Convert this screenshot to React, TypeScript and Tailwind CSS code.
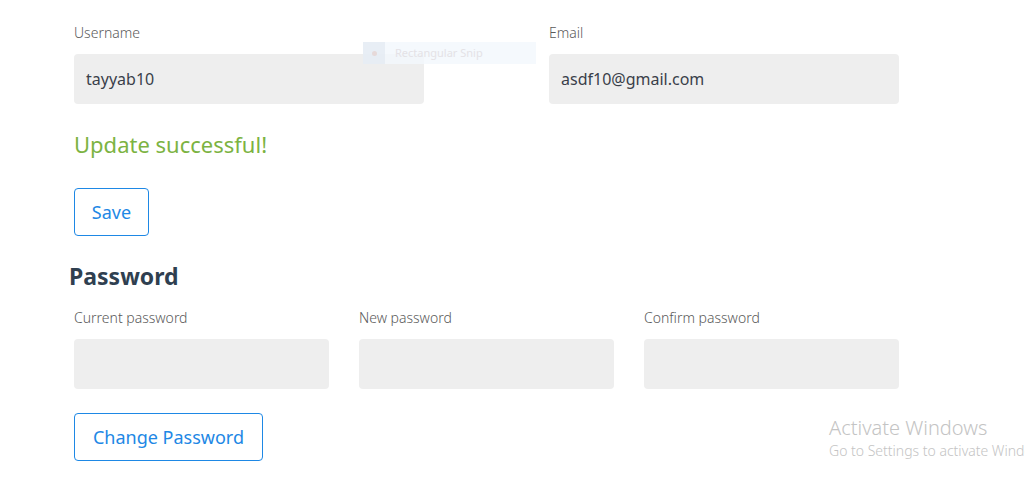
import React from "react";

const font = { fontFamily: '"Noto Sans", "Open Sans", sans-serif' };

function Field({ label, value, w }: { label: string; value?: string; w: string }) {
  return (
    <div className={`flex flex-col ${w}`}>
      <label className="text-[14px] leading-[20px] text-[#5a5a5a] font-light">{label}</label>
      <div className="mt-[11px] h-[50px] w-full rounded-[4px] bg-[#eeeeee] px-[12px] flex items-center text-[16px] text-[#3a3f4a]">
        {value}
      </div>
    </div>
  );
}

export default function App() {
  return (
    <div className="relative w-[1025px] h-[482px] overflow-hidden bg-white" style={font}>
      <div className="pl-[69px] pt-[23px]">
        <div className="pl-[5px]">
          <div className="flex gap-[125px]">
            <Field label="Username" value="tayyab10" w="w-[350px]" />
            <Field label="Email" value="asdf10@gmail.com" w="w-[350px]" />
          </div>
          <div className="mt-[24px] text-[22px] leading-[32px] text-[#7cb342]">Update successful!</div>
          <button className="mt-[28px] h-[48px] w-[75px] rounded-[4px] border border-[#1e88e5] text-[18px] text-[#1e88e5] flex items-center justify-center">
            Save
          </button>
        </div>
        <h2 className="mt-[24px] text-[23px] leading-[32px] font-bold text-[#2f3f50]">Password</h2>
        <div className="pl-[5px]">
          <div className="mt-[16px] flex gap-[30px]">
            <Field label="Current password" w="w-[255px]" />
            <Field label="New password" w="w-[255px]" />
            <Field label="Confirm password" w="w-[255px]" />
          </div>
          <button className="mt-[24px] h-[48px] w-[189px] rounded-[4px] border border-[#1e88e5] text-[18px] text-[#1e88e5] flex items-center justify-center">
            Change Password
          </button>
        </div>
      </div>

      {/* Snip tool ghost */}
      <div className="absolute left-[363px] top-[42px] w-[173px] h-[22px] bg-[#f3f8fd]/80 flex items-center">
        <div className="w-[22px] h-[22px] bg-[#e2e9f1]/70 flex items-center justify-center">
          <div className="w-[5px] h-[5px] rounded-full bg-[#e6d9d9]"></div>
        </div>
        <span className="ml-[10px] text-[11px] text-[#e4e2e6]">Rectangular Snip</span>
      </div>

      {/* Activate Windows watermark */}
      <div className="absolute left-[829px] top-[415px] whitespace-nowrap text-[#c4c4c4]">
        <div className="text-[20px] leading-[26px] font-light">Activate Windows</div>
        <div className="text-[14px] leading-[20px] font-light">Go to Settings to activate Windows.</div>
      </div>
    </div>
  );
}
